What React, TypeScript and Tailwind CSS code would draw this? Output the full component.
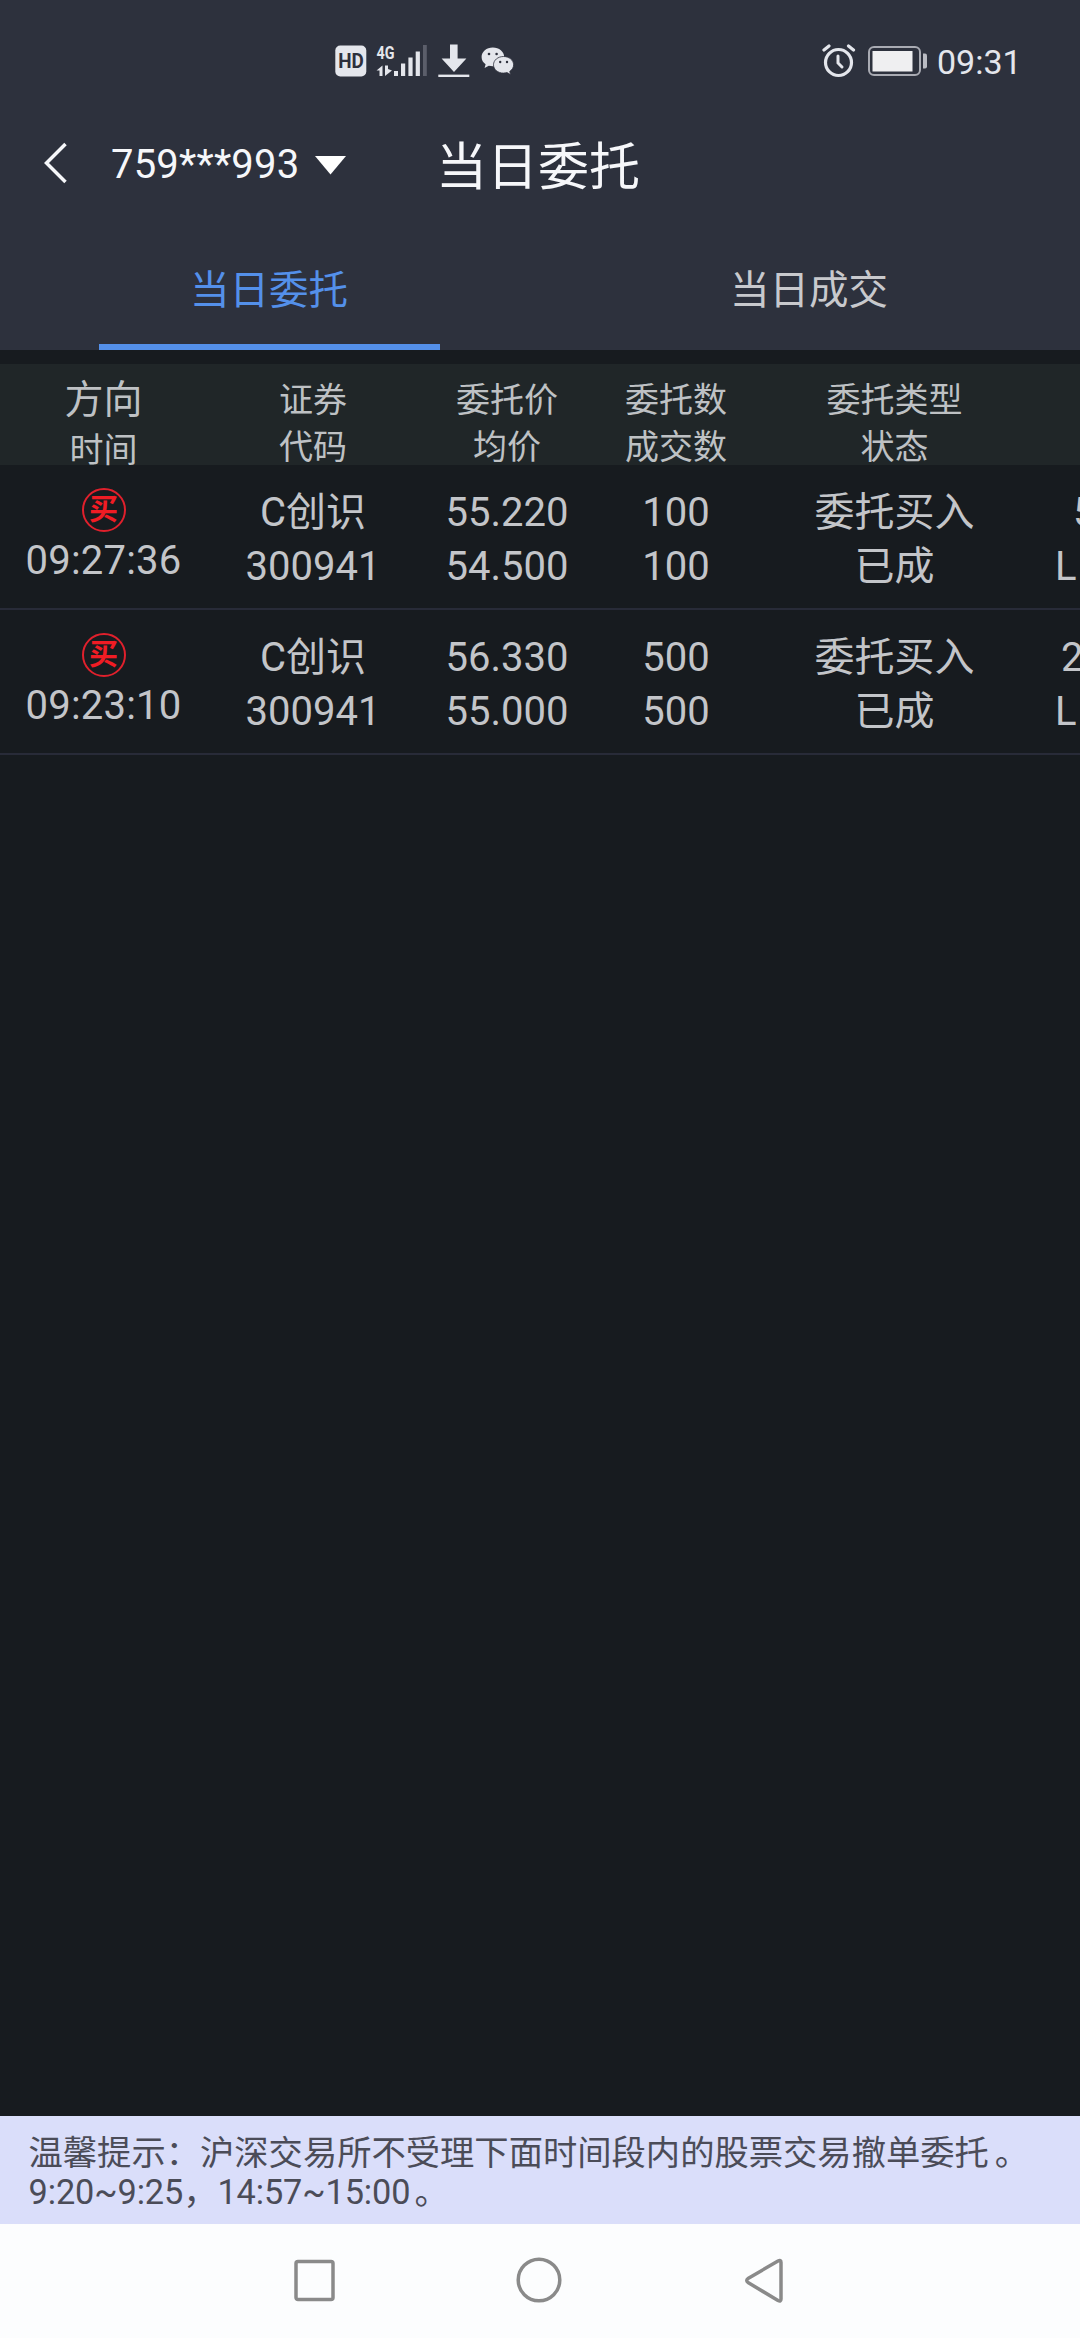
import clsx from 'clsx';

type Order = {
  time: string;
  name: string;
  code: string;
  price: string;
  avgPrice: string;
  amount: string;
  dealAmount: string;
  type: string;
  status: string;
  next: string;
  nextPad: string;
};

const orders: Order[] = [
  {
    time: '09:27:36',
    name: 'C创识',
    code: '300941',
    price: '55.220',
    avgPrice: '54.500',
    amount: '100',
    dealAmount: '100',
    type: '委托买入',
    status: '已成',
    next: '5',
    nextPad: 'pl-[41px]',
  },
  {
    time: '09:23:10',
    name: 'C创识',
    code: '300941',
    price: '56.330',
    avgPrice: '55.000',
    amount: '500',
    dealAmount: '500',
    type: '委托买入',
    status: '已成',
    next: '2',
    nextPad: 'pl-[29px]',
  },
];

const cols = [
  { width: 'w-[213px]', head: ['证券', '代码'] },
  { width: 'w-[175px]', head: ['委托价', '均价'] },
  { width: 'w-[163px]', head: ['委托数', '成交数'] },
  { width: 'w-[274px]', head: ['委托类型', '状态'] },
];

const StatusBar = () => (
  <div className="flex h-24 items-center pt-[26px] pl-[335px] text-[#e4e6ec]">
    {/* HD badge */}
    <svg width="32" height="32" viewBox="0 0 32 32">
      <rect x="0.3" y="0.5" width="31" height="31" rx="5" fill="#e4e6ec" />
      <text x="3.2" y="23.2" fontSize="20" fontWeight="700" textLength="25.6" lengthAdjust="spacingAndGlyphs" fill="#2d303c">
        HD
      </text>
    </svg>

    {/* 4G signal */}
    <svg className="ml-[9px] overflow-visible" width="52" height="34" viewBox="0 0 52 34" fill="#e4e6ec">
      <text x="0.6" y="14.6" fontSize="18.5" fontWeight="700" textLength="18" lengthAdjust="spacingAndGlyphs">
        4G
      </text>
      <path d="M0.5 26.5L6.500 21.500V32H3.500v-5.500zM9 21.500h3V25l4 1.500L9 32z" />
      <rect x="18" y="27" width="4" height="5" />
      <rect x="25" y="19.5" width="4.2" height="12.5" />
      <rect x="32.4" y="13.5" width="4.2" height="18.5" />
      <rect x="39.7" y="7.5" width="4.2" height="24.5" />
      <rect x="47" y="1" width="3.8" height="31" fill="#5b5e6a" />
    </svg>

    {/* Download */}
    <svg className="ml-[10px]" width="32" height="34" viewBox="0 0 32 34" fill="#e4e6ec">
      <path d="M12 0.5h7.6v14h8.8L16 28 3.6 14.5H12z" />
      <rect x="0.3" y="30.6" width="31" height="2.4" />
    </svg>

    {/* WeChat */}
    <svg className="ml-[11px]" width="34" height="28" viewBox="0 0 34 28">
      <path d="M11.8 0.5C5.5 0.5 0.6 4.7 0.6 10c0 3 1.5 5.6 4 7.3L3.6 21l4.2-2.2c1.3.3 2.6.5 4 .5 6.3 0 11.4-4.2 11.4-9.4S18.1.5 11.8.5z" fill="#e4e6ec" />
      <path d="M22.5 9.5c-5.6 0-10 3.7-10 8.3s4.4 8.3 10 8.3c1.2 0 2.4-.2 3.5-.5l3.7 2-1-3.2c2.4-1.5 3.9-3.9 3.9-6.6 0-4.6-4.5-8.3-10.100-8.3z" fill="#e4e6ec" stroke="#2d303c" strokeWidth="0.8" />
      <circle cx="8" cy="7" r="1.3" fill="#2d303c" />
      <circle cx="15.6" cy="7" r="1.3" fill="#2d303c" />
      <circle cx="19.2" cy="15" r="1.2" fill="#2d303c" />
      <circle cx="26" cy="15" r="1.2" fill="#2d303c" />
    </svg>

    {/* Alarm */}
    <svg className="ml-[307px]" width="34" height="34" viewBox="0 0 34 34" fill="none" stroke="#e4e6ec" strokeLinecap="round">
      <circle cx="16.5" cy="18.5" r="13" strokeWidth="3.2" />
      <path d="M16 12v7l4 4" strokeWidth="3" />
      <path d="M2 6L7 2M26.5 2l5 4" strokeWidth="3.2" />
    </svg>

    {/* Battery */}
    <svg className="ml-[12px] mt-[-1px]" width="60" height="30" viewBox="0 0 60 30">
      <rect x="1" y="1" width="51" height="28" rx="5" fill="none" stroke="#a9abb3" strokeWidth="2" />
      <rect x="4.5" y="5" width="40" height="20.5" fill="#efeff1" />
      <path d="M55 7.5h2q2 0 2 2v11q0 2-2 2h-2z" fill="#b9bbc2" />
    </svg>
    <span className="ml-[9px] pt-[2px] text-[34px] leading-none">09:31</span>
  </div>
);

const TitleBar = () => (
  <div className="flex h-[138px] items-center pl-11 text-[#f6f7fa]">
    <svg width="24" height="42" viewBox="0 0 24 42" fill="none" stroke="currentColor" strokeWidth="3.5" className="mt-[-5px]">
      <path d="M21.5 2L2.5 21l19 19" />
    </svg>
    <span className="ml-[43px] w-[190px] text-[40px] leading-none tracking-[0.2px]">759***993</span>
    <svg className="ml-[14px]" width="31" height="19" viewBox="0 0 31 19">
      <path d="M0 0h31L15.5 18.5z" fill="white" />
    </svg>
    <h1 className="ml-[90px] pt-[5px] text-[51px] leading-none">当日委托</h1>
  </div>
);

const Tab = ({ label, active }: { label: string; active?: boolean }) => (
  <div className="flex w-1/2 flex-col items-center pt-1">
    <span className={clsx('pr-[2px] text-[39.5px] leading-[106px]', active ? 'text-[#5490ea]' : 'text-[#c8c9cd]')}>{label}</span>
    {active && <div className="mr-[2px] h-1.5 w-[341px] bg-[#5490ea]" />}
  </div>
);

const BuyBadge = () => (
  <div className="flex size-11 items-center justify-center rounded-full border-[2.5px] border-[#e0202c] text-[29px] leading-none font-bold text-[#f01c24]">
    买
  </div>
);

const OrderRow = ({ order }: { order: Order }) => {
  const values = [
    [order.name, order.code],
    [order.price, order.avgPrice],
    [order.amount, order.dealAmount],
    [order.type, order.status],
  ];

  return (
    <div className="flex h-[145px] overflow-hidden border-b-2 border-[#282b38] text-center text-[40px] whitespace-nowrap">
      <div className="flex w-[207px] shrink-0 flex-col items-center pt-[23px]">
        <BuyBadge />
        <span className="mt-[5px] leading-[48px] tracking-[0.2px]">{order.time}</span>
      </div>
      {cols.map((col, i) => (
        <div key={col.head[0]} className={clsx('shrink-0 pt-[21px] pr-px leading-[54px]', col.width)}>
          <p>{values[i][0]}</p>
          <p>{values[i][1]}</p>
        </div>
      ))}
      <div className="shrink-0 pt-[21px] text-left leading-[54px]">
        <p className={order.nextPad}>{order.next}</p>
        <p className="pl-[23px]">L</p>
      </div>
    </div>
  );
};

const NavBar = () => (
  <div className="flex h-[114px] items-start bg-[#fcfdfe] pt-[33px] pl-[294px]">
    <svg width="41" height="48" viewBox="0 0 41 48" fill="none" stroke="#8a8a8a" strokeWidth="3.5">
      <rect x="2" y="4.5" width="37" height="38" rx="2" />
    </svg>
    <svg className="ml-[181px]" width="46" height="46" viewBox="0 0 46 46" fill="none" stroke="#8a8a8a" strokeWidth="3.5">
      <circle cx="23" cy="23" r="20.8" />
    </svg>
    <svg className="ml-[182px]" width="40" height="48" viewBox="0 0 40 48" fill="none" stroke="#8a8a8a" strokeWidth="3.5" strokeLinejoin="round">
      <path d="M34 4L4 21.5Q1.5 23.5 4 25.5L34 43.5Q37 45 37 42V5.5Q37 2.5 34 4z" />
    </svg>
  </div>
);

const App = () => {
  return (
    <div className="flex h-[2338px] w-[1080px] flex-col overflow-hidden bg-[#171b1f] font-['Roboto','Noto_Sans_CJK_SC',sans-serif] text-[#c3c5c9]">
      <header className="bg-[#2d313d]">
        <StatusBar />
        <TitleBar />
        <div className="flex h-[116px]">
          <Tab label="当日委托" active />
          <Tab label="当日成交" />
        </div>
      </header>

      <main className="flex-1 pt-3.5">
        <div className="flex h-[101px] bg-[#202628] pt-3 text-center text-[34px] text-[#bec1c4]">
          <div className="w-[207px]">
            <p className="text-[39px] leading-[48px]">方向</p>
            <p className="leading-[52px]">时间</p>
          </div>
          {cols.map((col) => (
            <div key={col.head[0]} className={clsx('pt-px pr-px leading-[47px]', col.width)}>
              <p>{col.head[0]}</p>
              <p>{col.head[1]}</p>
            </div>
          ))}
        </div>
        {orders.map((order) => (
          <OrderRow key={order.time} order={order} />
        ))}
      </main>

      <footer>
        <div className="h-[108px] bg-[#dadefa] pt-[18px] pl-[28.5px] text-[34.3px] leading-[39px] whitespace-nowrap text-[#4b4c58]">
          <p>
            温馨提示：沪深交易所不受理下面时间段内的股票交易撤单委托<span className="ml-[6px]">。</span>
          </p>
          <p className="tracking-[-0.1px]">
            9:20~9:25，14:57~15:00<span className="ml-[4px]">。</span>
          </p>
        </div>
        <NavBar />
      </footer>
    </div>
  );
};

export default App;
